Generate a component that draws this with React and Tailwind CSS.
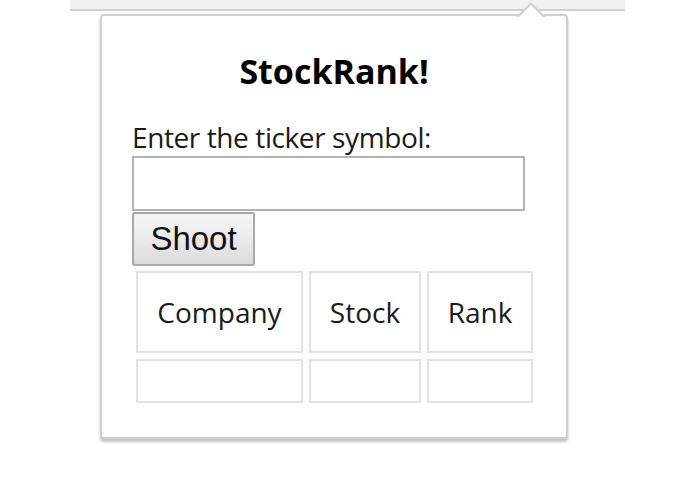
export default function App() {
  const cell = "border-2 border-[#e2e2e2] flex items-center justify-center text-[#1a1a1a]";
  return (
    <div className="relative w-[695px] h-[494px] bg-white overflow-hidden" style={{ fontFamily: '"Open Sans", "Noto Sans", sans-serif' }}>
      <div className="ml-[70px] w-[555px] h-[11px] bg-[#f1f1f1] border-b-2 border-[#d0d0d0]" />
      <div className="relative ml-[100px] mt-[3px] w-[468px] h-[425px] bg-white border-2 border-[#cfcfcf] rounded-[4px] shadow-[0_3px_3px_rgba(0,0,0,0.25)] pl-[30px]">
        <div className="absolute -top-[14px] left-[414px] w-0 h-0 border-l-[15px] border-r-[15px] border-b-[15px] border-l-transparent border-r-transparent border-b-[#d0d0d0]" />
        <div className="absolute -top-[11px] left-[416px] w-0 h-0 border-l-[13px] border-r-[13px] border-b-[13px] border-l-transparent border-r-transparent border-b-white" />
        <h1 className="text-center pr-[30px] pt-[32px] text-[34px] leading-[46px] font-bold text-black">StockRank!</h1>
        <div className="mt-[27px] text-[28px] leading-[32px] text-[#1a1a1a] tracking-[-0.4px]">Enter the ticker symbol:</div>
        <input className="block mt-[3px] w-[393px] h-[55px] border-2 border-[#b4b4b4] bg-white outline-none" />
        <button className="block mt-[1px] w-[123px] h-[54px] border-2 border-[#a8a8a8] rounded-[3px] bg-gradient-to-b from-[#f7f7f7] to-[#dcdcdc] text-[33px] text-[#111]" style={{ fontFamily: '"Liberation Sans", Arial, sans-serif' }}>Shoot</button>
        <div className="grid grid-cols-[167px_112px_106px] grid-rows-[82px_44px] gap-[6px] ml-[4px] mt-[5px] text-[28px]">
          <div className={cell}>Company</div>
          <div className={cell}>Stock</div>
          <div className={cell}>Rank</div>
          <div className={cell}></div>
          <div className={cell}></div>
          <div className={cell}></div>
        </div>
      </div>
    </div>
  );
}
